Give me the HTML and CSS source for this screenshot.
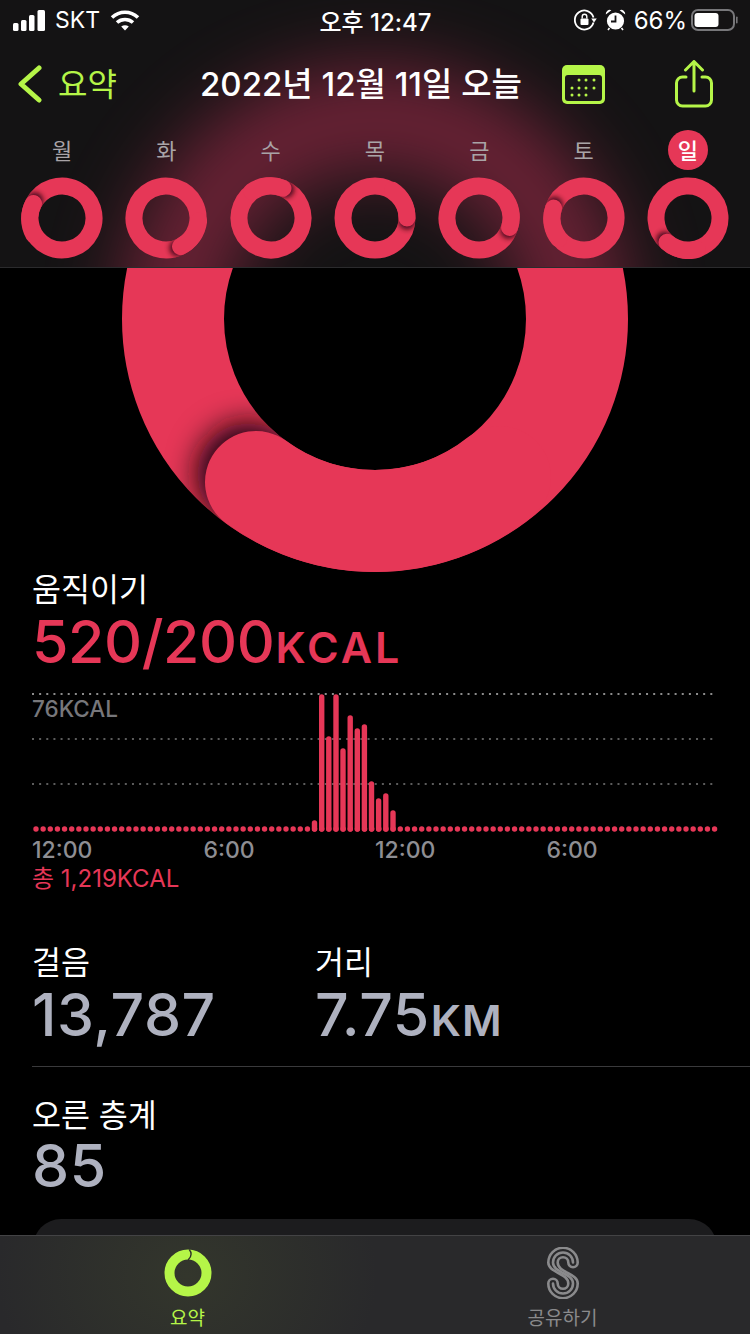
FILE: index.html
```html
<!DOCTYPE html>
<html lang="ko">

	<head>
		<meta charset="UTF-8">
		<title>요약</title>
		<link rel="stylesheet" href="styles.css">
	</head>

	<body>
		<div class="page">
			<header class="top">
				<div class="top-glow"></div>

				<div class="status">
					<div class="status-left">
						<svg width="33" height="21" viewBox="0 0 33 21" fill="#fff">
							<rect x="0" y="13" width="5.5" height="8" rx="1.5" />
							<rect x="8" y="10" width="5.5" height="11" rx="1.5" />
							<rect x="16" y="5" width="5.5" height="16" rx="1.5" />
							<rect x="24.5" y="0" width="7.5" height="21" rx="1.5" />
						</svg>
						<span>SKT</span>
						<svg class="wifi" width="30" height="21" viewBox="0 0 30 21" fill="none" stroke="#fff" stroke-width="3.6">
							<path d="M2 7.5C9.5 0.5 20.5 0.5 28 7.5" />
							<path d="M7 12.5C11.5 8.5 18.5 8.5 23 12.5" />
							<path d="M11.2 16.6 15 20.4 18.8 16.6C16.5 14.8 13.5 14.8 11.2 16.6Z" fill="#fff" stroke="none" />
						</svg>
					</div>
					<div class="status-time">오후 12:47</div>
					<div class="status-right">
						<svg width="23" height="22" viewBox="0 0 23 22" fill="none" stroke="#fff" stroke-width="1.8">
							<path d="M19.5 13.5A9.5 9.5 0 1 1 19.5 8.5" />
							<path d="M17.2 9.5 22.8 9.5 20 13.5Z" fill="#fff" stroke="none" />
							<rect x="6.5" y="9.5" width="8" height="6.5" rx="1" fill="#fff" stroke="none" />
							<path d="M8.2 9.5V7.6A2.3 2.3 0 0 1 12.8 7.6V9.5" stroke-width="1.4" />
						</svg>
						<svg class="alarm" width="21" height="22" viewBox="0 0 21 22" fill="#fff">
							<circle cx="10.5" cy="12" r="8.6" />
							<path d="M0.8 5.4A4 4 0 0 1 6.4 1.2ZM20.2 5.4A4 4 0 0 0 14.6 1.2Z" />
							<path d="M10.5 6.5V12.5H6" fill="none" stroke="#161516" stroke-width="1.8" />
							<path d="M4.5 19 3 21M16.5 19 18 21" stroke="#fff" stroke-width="1.6" />
						</svg>
						<span class="battery-text">66%</span>
						<svg class="battery" width="47" height="22" viewBox="0 0 47 22">
							<rect x="1" y="1" width="42" height="20" rx="6" fill="none" stroke="#77777a" stroke-width="2" />
							<rect x="3.5" y="4" width="24" height="14" rx="3" fill="#fff" />
							<rect x="45" y="7.5" width="1.6" height="7" rx="0.8" fill="#77777a" />
						</svg>
					</div>
				</div>

				<nav class="nav">
					<div class="nav-back">
						<svg width="24" height="38" viewBox="0 0 24 38" fill="none" stroke="#b5f548" stroke-width="5" stroke-linecap="round" stroke-linejoin="round">
							<path d="M21 3 3 19 21 35" />
						</svg>
						<span>요약</span>
					</div>
					<div class="nav-title">2022년 12월 11일 오늘</div>
					<div class="nav-icons">
						<svg width="43" height="39" viewBox="0 0 43 39">
							<rect width="43" height="39" rx="5" fill="#b5f548" />
							<rect x="3" y="10" width="37" height="26" rx="3" fill="#1a1718" />
							<g fill="#b5f548">
								<circle cx="17" cy="15" r="1.5" /><circle cx="24" cy="15" r="1.5" /><circle cx="32" cy="15" r="1.5" />
								<circle cx="10" cy="23" r="1.5" /><circle cx="17" cy="23" r="1.5" /><circle cx="24" cy="23" r="1.5" /><circle cx="32" cy="23" r="1.5" />
								<circle cx="10" cy="30" r="1.5" /><circle cx="17" cy="30" r="1.5" /><circle cx="24" cy="30" r="1.5" />
							</g>
						</svg>
						<svg width="38" height="48" viewBox="0 0 38 48" fill="none" stroke="#b5f548" stroke-width="3" stroke-linecap="round" stroke-linejoin="round">
							<path d="M11 17H7.5A6 6 0 0 0 1.5 23V40A6 6 0 0 0 7.5 46H30.5A6 6 0 0 0 36.500 40V23A6 6 0 0 0 30.500 17H27" />
							<path d="M19 31V2M10.500 10 19 1.500 27.500 10" />
						</svg>
					</div>
				</nav>

				<!-- 一周 -->
				<div class="week">
					<div class="day">
						<div class="day-name">월</div>
						<svg class="mini" viewBox="0 0 82 82">
							<defs>
								<mask id="mini-mask" maskUnits="userSpaceOnUse" x="0" y="0" width="82" height="82">
									<circle cx="41" cy="41" r="32" fill="none" stroke="#fff" stroke-width="17" />
								</mask>
								<filter id="mini-blur" x="-100%" y="-100%" width="300%" height="300%">
									<feGaussianBlur stdDeviation="2.4" />
								</filter>
								<g id="mini-ring">
									<circle cx="41" cy="41" r="32" fill="none" stroke="#e63757" stroke-width="17" />
									<g mask="url(#mini-mask)">
										<circle cx="44" cy="9" r="8.500" fill="#23060e" opacity="0.8" filter="url(#mini-blur)" />
									</g>
									<path d="M13.300 23.500A32 32 0 0 1 41 9" fill="none" stroke="#e63757" stroke-width="17" stroke-linecap="round" />
								</g>
							</defs>
							<use href="#mini-ring" transform="rotate(297 41 41)" />
						</svg>
					</div>
					<div class="day">
						<div class="day-name">화</div>
						<svg class="mini" viewBox="0 0 82 82"><use href="#mini-ring" transform="rotate(153 41 41)" /></svg>
					</div>
					<div class="day">
						<div class="day-name">수</div>
						<svg class="mini" viewBox="0 0 82 82"><use href="#mini-ring" transform="rotate(22 41 41)" /></svg>
					</div>
					<div class="day">
						<div class="day-name">목</div>
						<svg class="mini" viewBox="0 0 82 82"><use href="#mini-ring" transform="rotate(90 41 41)" /></svg>
					</div>
					<div class="day">
						<div class="day-name">금</div>
						<svg class="mini" viewBox="0 0 82 82"><use href="#mini-ring" transform="rotate(107 41 41)" /></svg>
					</div>
					<div class="day">
						<div class="day-name">토</div>
						<svg class="mini" viewBox="0 0 82 82"><use href="#mini-ring" transform="rotate(288 41 41)" /></svg>
					</div>
					<div class="day">
						<div class="day-name today">일</div>
						<svg class="mini" viewBox="0 0 82 82"><use href="#mini-ring" transform="rotate(221 41 41)" /></svg>
					</div>
				</div>
			</header>

			<svg class="big-ring" width="750" height="304" viewBox="0 268 750 304">
				<defs>
					<mask id="big-mask" maskUnits="userSpaceOnUse" x="0" y="0" width="750" height="700">
						<circle cx="375" cy="319" r="202" fill="none" stroke="#fff" stroke-width="102" />
					</mask>
					<filter id="big-blur" x="-100%" y="-100%" width="300%" height="300%">
						<feGaussianBlur stdDeviation="15" />
					</filter>
				</defs>
				<circle cx="375" cy="319" r="202" fill="none" stroke="#e63757" stroke-width="102" />
				<g mask="url(#big-mask)">
					<circle cx="248" cy="474" r="51" fill="#14040a" filter="url(#big-blur)" />
				</g>
				<path d="M256 482A202 202 0 0 0 375 521A202 202 0 0 0 500 477" fill="none" stroke="#e63757" stroke-width="102" stroke-linecap="round" />
			</svg>

			<section class="move">
				<div class="label">움직이기</div>
				<div class="value value-red">520/200<small>KCAL</small></div>
			</section>

			<div class="chart">
				<svg width="750" height="145" viewBox="0 690 750 145">
					<g fill="none" stroke-width="2" stroke-dasharray="2 5.140">
						<line x1="32" y1="694" x2="716" y2="694" stroke="#8c8c8c" />
						<line x1="32" y1="739" x2="716" y2="739" stroke="#5c5c5c" />
						<line x1="32" y1="784" x2="716" y2="784" stroke="#5c5c5c" />
					</g>
					<line x1="36" y1="829" x2="715" y2="829" fill="none" stroke="#e63757" stroke-width="5.400" stroke-linecap="round" stroke-dasharray="0 7.143" />
					<g fill="none" stroke="#e63757" stroke-width="5.400" stroke-linecap="round">
						<path d="M314.500 829V823" />
						<path d="M321.700 829V697" />
						<path d="M328.800 829V739" />
						<path d="M336 829V697" />
						<path d="M343 829V751" />
						<path d="M350.200 829V718" />
						<path d="M357.300 829V731" />
						<path d="M364.400 829V727" />
						<path d="M371.500 829V784" />
						<path d="M378.600 829V801" />
						<path d="M385.800 829V796" />
						<path d="M393 829V813" />
					</g>
				</svg>
				<div class="chart-max">76KCAL</div>
			</div>

			<div class="axis">
				<span>12:00</span>
				<span>6:00</span>
				<span>12:00</span>
				<span>6:00</span>
			</div>
			<div class="total">총 1,219KCAL</div>

			<section class="stats">
				<div class="stat">
					<div class="label">걸음</div>
					<div class="value">13,787</div>
				</div>
				<div class="stat">
					<div class="label">거리</div>
					<div class="value">7.75<small>KM</small></div>
				</div>
			</section>

			<section class="floors">
				<div class="label">오른 층계</div>
				<div class="value">85</div>
			</section>

			<div class="card"></div>

			<footer class="tabs">
				<div class="tab tab-on">
					<svg width="48" height="52" viewBox="0 -2 48 52" fill="none">
						<circle cx="24" cy="24" r="18.500" stroke="#b5f548" stroke-width="10" />
						<path d="M25.500 1C27.500 3 28 7 24.500 10.500" stroke="#2d302a" stroke-width="1.400" stroke-linecap="round" />
					</svg>
					<span>요약</span>
				</div>
				<div class="tab">
					<svg width="32" height="52" viewBox="0 0 32 52" fill="none" stroke="#8a8a8c" stroke-width="2.600">
						<path d="M30.700 15.500A14.700 14.700 0 0 0 1.300 15.500C1.300 26 21.300 26 21.300 36.500A5.300 5.300 0 0 1 10.700 36.500A4.700 4.700 0 0 0 1.300 36.500A14.700 14.700 0 0 0 30.700 36.500C30.700 26 10.700 26 10.700 15.500A5.300 5.300 0 0 1 21.300 15.500A4.700 4.700 0 0 0 30.700 15.500Z" />
						<path d="M26 15.500A10 10 0 0 0 6 15.500C6 26 26 26 26 36.500A10 10 0 0 1 6 36.500" stroke-linecap="round" />
					</svg>
					<span>공유하기</span>
				</div>
			</footer>
		</div>
	</body>

</html>
```

FILE: styles.css
```css
* {
	margin: 0;
	box-sizing: border-box;
}

body {
	background: #000;
	font-family: Inter, "Noto Sans CJK KR", sans-serif;
	color: #fff;
}

.page {
	position: relative;
	width: 750px;
	height: 1334px;
	overflow: hidden;
	background: #000;
}

.top {
	position: relative;
	height: 268px;
	overflow: hidden;
	background: #141314;
	border-bottom: 1px solid #2b2b2d;
}

/* 圆环模糊后的背景 */
.top-glow {
	position: absolute;
	left: 122px;
	top: 66px;
	width: 506px;
	height: 506px;
	border: 102px solid #a52c4c;
	border-radius: 50%;
	filter: blur(38px);
	opacity: 0.62;
}

.status,
.nav,
.week {
	position: relative;
}

.status {
	display: grid;
	grid-template-columns: 1fr auto 1fr;
	align-items: center;
	height: 40px;
	padding: 0 12px 0 13px;
	font-size: 24px;
}

.status-left,
.status-right {
	display: flex;
	align-items: center;
}

.status-left span {
	margin-left: 9px;
	font-size: 23px;
}

.wifi {
	margin-left: 10px;
}

.status-time {
	font-size: 24px;
	font-weight: 500;
}

.status-right {
	justify-content: flex-end;
}

.alarm {
	margin-left: 8px;
}

.battery-text {
	margin-left: 8px;
}

.battery {
	margin-left: 4px;
}

.nav {
	display: flex;
	align-items: center;
	height: 48px;
	margin-top: 20px;
	padding-left: 18px;
}

.nav-back {
	display: flex;
	align-items: center;
	width: 182px;
	color: #b5f548;
	font-size: 32px;
}

.nav-back span {
	margin-left: 16px;
	padding-bottom: 4px;
}

.nav-title {
	padding-bottom: 4px;
	font-size: 33px;
	font-weight: 500;
	white-space: nowrap;
}

.nav-icons {
	display: flex;
	align-items: center;
	margin-left: 40px;
	gap: 70px;
}

.week {
	display: grid;
	grid-template-columns: repeat(7, 1fr);
	margin-top: 22px;
	padding: 0 10px;
}

.day {
	display: flex;
	flex-direction: column;
	align-items: center;
}

.day-name {
	display: flex;
	align-items: center;
	justify-content: center;
	width: 40px;
	height: 40px;
	margin-bottom: 7px;
	padding-bottom: 3px;
	border-radius: 50%;
	font-size: 22px;
	color: #a9a4a7;
}

.today {
	background: #e63757;
	color: #fff;
	font-weight: 500;
}

.mini {
	display: block;
	width: 82px;
	height: 82px;
}

.big-ring {
	display: block;
}

.move,
.floors {
	padding-left: 32px;
}

.label {
	height: 36px;
	font-size: 31.500px;
	line-height: 36px;
}

.value {
	height: 60px;
	font-size: 59px;
	font-weight: 500;
	line-height: 60px;
	letter-spacing: 0.5px;
	color: #aeb1bf;
}

.value small {
	margin-left: 1px;
	font-size: 43px;
	font-weight: 600;
	letter-spacing: 1px;
}

.value-red {
	margin-top: 4px;
	letter-spacing: -0.4px;
	color: #e63757;
}

.value-red small {
	letter-spacing: 3px;
}

.chart {
	position: relative;
	height: 145px;
	margin-top: 18px;
}

.chart svg {
	display: block;
}

.chart-max {
	position: absolute;
	left: 32px;
	top: 5px;
	font-size: 22.500px;
	font-weight: 500;
	color: #77777b;
}

.axis {
	display: grid;
	grid-template-columns: repeat(4, 171.500px);
	height: 30px;
	padding-left: 32px;
	font-size: 23px;
	font-weight: 500;
	line-height: 30px;
	color: #8e8e93;
}

.total {
	height: 27px;
	padding-left: 32px;
	font-size: 24px;
	line-height: 27px;
	color: #e63757;
}

.stats {
	display: grid;
	grid-template-columns: 283px 1fr;
	margin-top: 53px;
	margin-left: 32px;
	padding-bottom: 21px;
	border-bottom: 1px solid #3a3a3c;
}

.stat .value {
	margin-top: 4px;
}

.floors {
	margin-top: 31px;
}

.floors .value {
	margin-top: 2px;
}

.card {
	height: 120px;
	margin: 23px 33px 0;
	border-radius: 28px;
	background: #1c1c1e;
}

.tabs {
	position: absolute;
	left: 0;
	bottom: 0;
	display: grid;
	grid-template-columns: 1fr 1fr;
	width: 100%;
	height: 99px;
	border-top: 1px solid #434345;
	background: radial-gradient(ellipse 190px 160px at 187px 40px, #33362c, rgba(42, 42, 43, 0)), #29292b;
}

.tab {
	display: flex;
	flex-direction: column;
	align-items: center;
	padding-top: 11px;
	font-size: 19px;
	color: #8a8a8c;
}

.tab span {
	margin-top: 8px;
	line-height: 24px;
}

.tab-on {
	color: #b5f548;
}
```
